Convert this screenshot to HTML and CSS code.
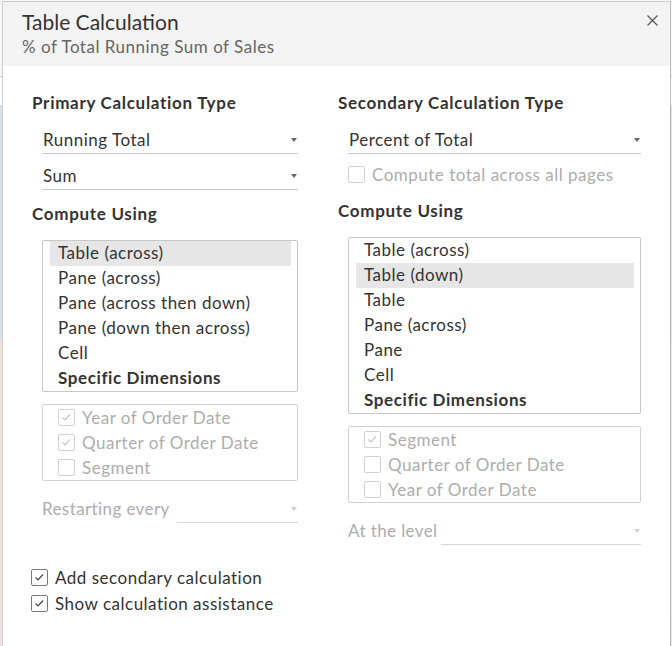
FILE: index.html
```html
<!DOCTYPE html>
<html lang="en">
<head>
<meta charset="utf-8">
<title>Table Calculation</title>
<link rel="stylesheet" href="styles.css">
</head>
<body>
<div class="dialog">
  <div class="header">
    <div class="titles">
      <div class="title">Table Calculation</div>
      <div class="subtitle">% of Total Running Sum of Sales</div>
    </div>
    <div class="close" aria-label="Close">
      <svg width="11" height="11" viewBox="0 0 11 11"><path d="M0.5 0.5 L10.5 10.5 M10.5 0.5 L0.5 10.5" stroke="#555" stroke-width="1.2" fill="none"/></svg>
    </div>
  </div>
  <div class="content">
    <div class="columns">
      <section class="col">
        <h2 class="heading">Primary Calculation Type</h2>
        <div class="select first"><span>Running Total</span><i class="caret"></i></div>
        <div class="select second"><span>Sum</span><i class="caret"></i></div>
        <h2 class="heading compute-left">Compute Using</h2>
        <ul class="list">
          <li class="selected">Table (across)</li>
          <li>Pane (across)</li>
          <li>Pane (across then down)</li>
          <li>Pane (down then across)</li>
          <li>Cell</li>
          <li class="bold">Specific Dimensions</li>
        </ul>
        <div class="dims">
          <div class="check-row disabled"><span class="box"><svg width="15" height="15" viewBox="0 0 15 15"><path d="M3.5 7.5 L6 10 L11 4.5" stroke="#c6c6c6" stroke-width="1.2" fill="none"/></svg></span><span>Year of Order Date</span></div>
          <div class="check-row disabled"><span class="box"><svg width="15" height="15" viewBox="0 0 15 15"><path d="M3.5 7.5 L6 10 L11 4.5" stroke="#c6c6c6" stroke-width="1.2" fill="none"/></svg></span><span>Quarter of Order Date</span></div>
          <div class="check-row disabled"><span class="box"></span><span>Segment</span></div>
        </div>
        <div class="level">
          <span class="label">Restarting every</span>
          <div class="select disabled restart"><span></span><i class="caret"></i></div>
        </div>
      </section>
      <section class="col">
        <h2 class="heading">Secondary Calculation Type</h2>
        <div class="select first"><span>Percent of Total</span><i class="caret"></i></div>
        <div class="check-row disabled inline-check"><span class="box"></span><span>Compute total across all pages</span></div>
        <h2 class="heading compute-right">Compute Using</h2>
        <ul class="list list-right">
          <li>Table (across)</li>
          <li class="selected">Table (down)</li>
          <li>Table</li>
          <li>Pane (across)</li>
          <li>Pane</li>
          <li>Cell</li>
          <li class="bold">Specific Dimensions</li>
        </ul>
        <div class="dims">
          <div class="check-row disabled"><span class="box"><svg width="15" height="15" viewBox="0 0 15 15"><path d="M3.5 7.5 L6 10 L11 4.5" stroke="#c6c6c6" stroke-width="1.2" fill="none"/></svg></span><span>Segment</span></div>
          <div class="check-row disabled"><span class="box"></span><span>Quarter of Order Date</span></div>
          <div class="check-row disabled"><span class="box"></span><span>Year of Order Date</span></div>
        </div>
        <div class="level">
          <span class="label">At the level</span>
          <div class="select disabled atlevel"><span></span><i class="caret"></i></div>
        </div>
      </section>
    </div>
    <div class="options">
      <div class="check-row option"><span class="box"><svg width="15" height="15" viewBox="0 0 15 15"><path d="M3.5 7.5 L6 10 L11 4.5" stroke="#444" stroke-width="1.2" fill="none"/></svg></span><span>Add secondary calculation</span></div>
      <div class="check-row option"><span class="box"><svg width="15" height="15" viewBox="0 0 15 15"><path d="M3.5 7.5 L6 10 L11 4.5" stroke="#444" stroke-width="1.2" fill="none"/></svg></span><span>Show calculation assistance</span></div>
    </div>
  </div>
</div>
</body>
</html>
```

FILE: styles.css
```css
* { box-sizing: border-box; }
html, body { margin: 0; height: 100%; }
body {
  font-family: Lato, "Noto Sans", sans-serif;
  color: #333;
  overflow: hidden;
  background: linear-gradient(to bottom,
    #f6f6f6 0, #f6f6f6 76px, #cfcfcf 76px, #cfcfcf 77px,
    #fff 77px, #fff 105px, #d7dfe7 105px, #d7dfe7 340px,
    #f4e1d4 340px, #f4e1d4 615px, #f2e0e2 615px);
}
.dialog {
  margin: 1px 0 0 2px;
  width: 669px;
  height: 700px;
  background: #fff;
  border: 1px solid #cdcdcd;
  border-right-color: #bdbdbd;
}
.header {
  height: 64px;
  background: #f3f3f3;
  display: flex;
  justify-content: space-between;
  padding: 8px 0 0 19px;
}
.title { font-size: 21px; line-height: 24px; color: #333; }
.subtitle { font-size: 17px; line-height: 20px; color: #666; margin-top: 3px; letter-spacing: 0.5px; }
.close { width: 11px; height: 11px; margin: 5px 12px 0 0; }
.close svg { display: block; }

.content { padding: 27px 0 0 29px; }
.columns {
  display: grid;
  grid-template-columns: 266px 303px;
  column-gap: 40px;
  align-items: start;
}
.heading {
  margin: 0;
  font-size: 17px;
  line-height: 20px;
  font-weight: 700;
  letter-spacing: 0.7px;
  color: #333;
}
.select {
  display: flex;
  align-items: center;
  justify-content: space-between;
  height: 27px;
  line-height: 26px;
  font-size: 17px;
  letter-spacing: 0.5px;
  border-bottom: 1px solid #c9c9c9;
  padding: 0 1px 0 1px;
  margin-left: 10px;
}
.select.first { margin-top: 14px; }
.select.second { margin-top: 9px; }
.caret {
  width: 0; height: 0;
  border-left: 3.5px solid transparent;
  border-right: 3.5px solid transparent;
  border-top: 4px solid #666;
}
.select.disabled { border-bottom-color: #d6d6d6; }
.select.disabled .caret { border-top-color: #cfcfcf; }
.compute-left { margin-top: 14px; }
.compute-right { margin-top: 15px; }

.list {
  list-style: none;
  margin: 16px 0 0 10px;
  padding: 0 6px 0 7px;
  border: 1px solid #c8c8c8;
  border-radius: 2px;
}
.list-right { margin-top: 16px; }
.list li {
  height: 25px;
  line-height: 24px;
  padding-left: 8px;
  font-size: 17px;
  letter-spacing: 0.5px;
  white-space: nowrap;
}
.list li.selected { background: #e6e6e6; }
.list li.bold { font-weight: 700; letter-spacing: 0.6px; }

.dims {
  margin: 12px 0 0 10px;
  border: 1px solid #d2d2d2;
  border-radius: 2px;
  padding-left: 15px;
}
.check-row {
  display: flex;
  align-items: center;
  gap: 7px;
  height: 25px;
  font-size: 17px;
  letter-spacing: 0.5px;
  white-space: nowrap;
}
.check-row.disabled { color: #adadad; }
.box {
  width: 17px;
  height: 17px;
  border: 1px solid #d2d2d2;
  border-radius: 2px;
  background: #fff;
  flex: none;
}
.box svg { display: block; }
.inline-check { margin: 9px 0 0 10px; height: 23px; }

.level {
  display: flex;
  justify-content: space-between;
  align-items: flex-end;
  margin: 15px 0 0 10px;
}
.level .label {
  font-size: 17px;
  letter-spacing: 0.4px;
  line-height: 25px;
  padding-bottom: 2px;
  color: #adadad;
}
.level .select { margin-left: 0; }
.select.restart { width: 121px; }
.select.atlevel { width: 200px; }

.options { margin: 19px 0 0 -1px; }
.check-row.option { height: 26px; color: #333; }
.check-row.option .box { border-color: #7a7a7a; }
```
